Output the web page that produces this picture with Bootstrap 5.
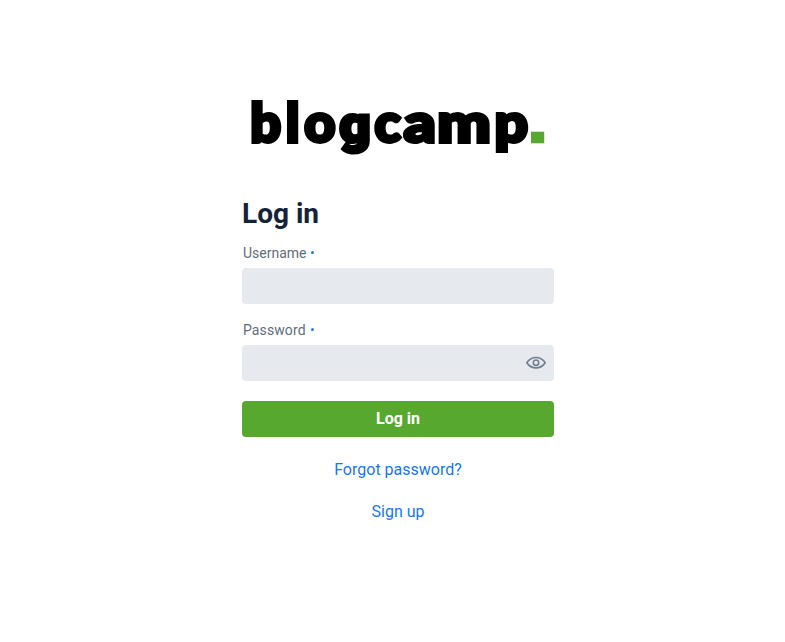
<!DOCTYPE html>
<html lang="en">
<head>
<meta charset="utf-8">
<meta name="viewport" content="width=device-width, initial-scale=1">
<title>Log in - blogcamp</title>
<link href="https://cdn.jsdelivr.net/npm/bootstrap@5.3.0/dist/css/bootstrap.min.css" rel="stylesheet">
<style>
body{font-family:Roboto,"Liberation Sans",sans-serif;background:#fff;color:#14233a}
.login-box{width:312px;margin-left:242px;padding-top:89px}
.logo{height:80px;overflow:visible}
.logo text{font-family:Lato,sans-serif;font-weight:900;font-size:54px;stroke:#000;stroke-width:3.8px;stroke-linejoin:miter;stroke-miterlimit:2}
.logo .round-g{font-family:Roboto,sans-serif;font-size:52px;stroke-width:3.2px}
.title{font-size:28px;line-height:36px;margin-top:27px;margin-bottom:11px}
.field-label{font-size:14px;line-height:20px;color:#626d7a;padding-left:1px;margin-bottom:5px}
.dot{width:3px;height:3px;border-radius:50%;background:#2478f0;margin:0 0 2px 4px}
.pass-label{letter-spacing:.1px}
.pass-label .dot{margin-left:5px}
.field{height:36px;background:#e6eaef;border-radius:4px;border:0;color:#14233a}
.field:focus{background:#e6eaef}
.eye{width:20px;height:20px;right:8px;top:8px;color:#6f7e90;line-height:0}
.submit{height:36px;margin-top:20px;background:#57a82f;color:#fff;border-radius:4px;border:0;font-size:16px;line-height:24px;padding:5px}
.submit:hover{background:#4c9828;color:#fff}
.links{gap:18px;padding-top:21px}
.action{font-size:16px;line-height:24px;color:#1677f0}
</style>
</head>
<body>
<main class="login-box">
<svg class="logo d-block w-100" viewBox="242 89 312 80" role="img" aria-label="blogcamp.">
<text y="141.500" x="250.200 285.800 304.200">blo</text>
<text class="round-g" y="142" x="339.300" textLength="31.500" lengthAdjust="spacingAndGlyphs">g</text>
<text y="141.500" x="374.500">c</text>
<text y="141.500" x="403.700" textLength="32" lengthAdjust="spacingAndGlyphs">a</text>
<text y="141.500" x="437.200" textLength="53.500" lengthAdjust="spacingAndGlyphs">m</text>
<text y="142" x="494.500" textLength="33.500" lengthAdjust="spacingAndGlyphs">p</text>
<rect x="531" y="131.700" width="13.200" height="11.600" fill="#57a82f"/>
</svg>
<h1 class="title fw-bold">Log in</h1>
<form>
<label class="field-label d-flex align-items-center" for="username">Username<span class="dot"></span></label>
<input class="form-control field" id="username" type="text">
<div class="pt-3">
<label class="field-label pass-label d-flex align-items-center" for="password">Password<span class="dot"></span></label>
<div class="position-relative">
<input class="form-control field" id="password" type="password">
<button type="button" class="eye btn p-0 border-0 position-absolute" aria-label="Show password">
<svg width="20" height="20" viewBox="0 0 20 20" fill="none" stroke="currentColor" stroke-width="1.600"><path d="M.8 9.700C5.500 2.800 14.500 2.800 19.200 9.700C14.500 16.600 5.500 16.600 .8 9.700Z" stroke-linejoin="round"/><circle cx="10" cy="9.700" r="2.700"/></svg>
</button>
</div>
</div>
<button class="btn submit w-100 fw-bold d-block" type="button">Log in</button>
<div class="d-flex flex-column align-items-center links">
<a class="action text-decoration-none" href="#">Forgot password?</a>
<a class="action text-decoration-none" href="#">Sign up</a>
</div>
</form>
</main>
<script src="https://cdn.jsdelivr.net/npm/bootstrap@5.3.0/dist/js/bootstrap.bundle.min.js"></script>
</body>
</html>
